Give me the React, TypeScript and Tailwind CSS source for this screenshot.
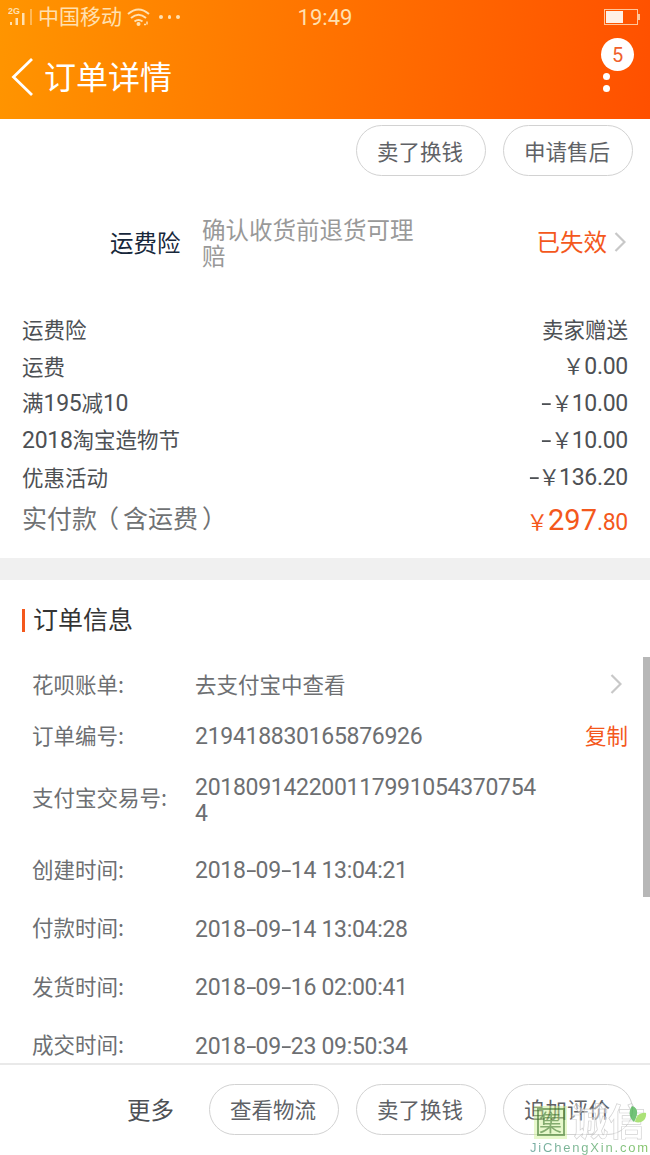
import type { ReactNode } from "react";

const priceRows = [
  { label: <>运费险</>, value: <>卖家赠送</> },
  { label: <>运费</>, value: <Yen amount="0.00" /> },
  { label: <>满<Num>195</Num>减<Num>10</Num></>, value: <Yen minus amount="10.00" /> },
  { label: <><Num>2018</Num>淘宝造物节</>, value: <Yen minus amount="10.00" /> },
  { label: <>优惠活动</>, value: <Yen minus amount="136.20" /> },
];

const timeRows = [
  { label: "创建时间:", date: "2018-09-14 13:04:21" },
  { label: "付款时间:", date: "2018-09-14 13:04:28" },
  { label: "发货时间:", date: "2018-09-16 02:00:41" },
  { label: "成交时间:", date: "2018-09-23 09:50:34" },
];

// digits run slightly larger than the Chinese text around them
function Num({ children }: { children: ReactNode }) {
  return (
    <span className="font-['Roboto','Noto_Sans_CJK_SC',sans-serif] text-[23px] tracking-[-0.3px]">{children}</span>
  );
}

function Dash() {
  return <span className="inline-block w-[10px] scale-x-160 text-center">-</span>;
}

function Yen({ amount, minus = false }: { amount: string; minus?: boolean }) {
  return (
    <span>
      {minus && <Num><Dash /></Num>}
      <span className={minus ? "-mr-px" : ""}>￥</span>
      <Num>{amount}</Num>
    </span>
  );
}

function DateText({ value }: { value: string }) {
  const parts = value.split("-");
  return (
    <span className="pt-px leading-none whitespace-nowrap">
      <Num>
        {parts[0]}<Dash />{parts[1]}<Dash />{parts[2]}
      </Num>
    </span>
  );
}

function Pill({ children }: { children: ReactNode }) {
  return (
    <button className="h-[51px] w-[130px] shrink-0 rounded-full border border-[#d2d2d2] bg-white pr-[2px] text-[21.5px] leading-none text-[#606266]">
      {children}
    </button>
  );
}

function Chevron() {
  return (
    <svg className="h-[20px] w-[12px] shrink-0" viewBox="0 0 12 20" fill="none" stroke="#c8c8c8" strokeWidth="2.2">
      <path d="M1.500 1L10.500 10L1.500 19" />
    </svg>
  );
}

function StatusBar() {
  return (
    <div className="flex h-[34px] items-center text-[#ffe0b0]">
      <div className="flex flex-1 items-center pl-[8px]">
        <svg className="h-[20px] w-[26px]" viewBox="0 0 26 20" fill="currentColor">
          <text x="0" y="7" fontSize="9" fontWeight="bold" fontFamily="Liberation Sans, sans-serif">2G</text>
          <rect x="2" y="15" width="2" height="3" />
          <rect x="7.500" y="11" width="2.500" height="7" />
          <rect x="14" y="6" width="2.500" height="12" />
          <rect x="22.500" y="2" width="1" height="16" />
        </svg>
        <span className="ml-[4px] pb-[4px] text-[21px] leading-none">中国移动</span>
        <svg className="ml-[5px] h-[20px] w-[24px]" viewBox="0 0 24 20" fill="none" stroke="currentColor" strokeWidth="2">
          <path d="M1 7Q11.500 -2 22 7" />
          <path d="M4 11Q11.500 4.500 19 11" />
          <path d="M7.500 14.500Q11.500 11.500 15.500 14.500" />
          <circle cx="11.500" cy="17" r="1" fill="currentColor" />
          <path d="M17 17.500h2M20 14.500v3" strokeWidth="1.500" />
        </svg>
        <div className="ml-[8px] flex gap-[5px]">
          <span className="size-[3.500px] rounded-full bg-current" />
          <span className="size-[3.500px] rounded-full bg-current" />
          <span className="size-[3.500px] rounded-full bg-current" />
        </div>
      </div>
      <span className="pt-[2px] pl-[2px] font-['Roboto',sans-serif] text-[22px] leading-none">19:49</span>
      <div className="flex flex-1 items-center justify-end pr-[10px]">
        <div className="h-[16px] w-[34px] border border-[#ffc59a] p-px">
          <div className="h-full w-[17px] bg-[#fff0e6]" />
        </div>
        <div className="h-[6px] w-[2px] bg-[#ffc59a]" />
      </div>
    </div>
  );
}

function Header() {
  return (
    <header className="h-[119px] shrink-0 bg-[linear-gradient(97deg,#ff9500_0%,#ff5000_100%)]">
      <StatusBar />
      <div className="flex h-[85px] items-center pr-[40px] pl-[11px] text-white">
        <svg className="h-[40px] w-[23px]" viewBox="0 0 23 40" fill="none" stroke="currentColor" strokeWidth="2.8">
          <path d="M21 2L2.500 20L21 38" />
        </svg>
        <h1 className="ml-[10px] flex-1 pb-[4px] text-[32px] leading-none">订单详情</h1>
        <div className="relative flex flex-col gap-[5px] pt-[11px]">
          <span className="size-[7px] rounded-full bg-white" />
          <span className="size-[7px] rounded-full bg-white" />
          <span className="absolute -top-[24px] -left-[2px] flex size-[33px] items-center justify-center rounded-full bg-white pt-[2px] font-['Roboto',sans-serif] text-[20px] leading-none text-[#f0602c]">
            5
          </span>
        </div>
      </div>
    </header>
  );
}

function InfoRow({ label, className, children }: { label: string; className: string; children: ReactNode }) {
  return (
    <div className={`flex items-center pr-[22px] pl-[32px] ${className}`}>
      <span className="w-[163px] shrink-0 pb-[4px] text-[21.5px] leading-none">{label}</span>
      {children}
    </div>
  );
}

function Watermark() {
  return (
    <div className="pointer-events-none absolute right-0 bottom-0 w-[121px] opacity-75">
      <div className="flex h-[34px] items-center">
        <div className="ml-[5px] flex size-[33px] shrink-0 items-center justify-center bg-[#c9f08c]/60">
          <span className="flex size-[28px] items-center justify-center border-2 border-[#5b9140] pb-[2px] text-[23px] leading-none text-[#5b9140]">
            集
          </span>
        </div>
        <span className="ml-[4px] pb-[4px] text-[37px] leading-none font-bold whitespace-nowrap text-white/60 [-webkit-text-stroke:0.7px_#c4c4c4]">诚信</span>
      </div>
      <svg className="absolute top-0 right-[3px] h-[20px] w-[18px]" viewBox="0 0 18 20">
        <path d="M3 1C10 3 9 10 5 17C-1 12 0 5 3 1Z" fill="#45b04b" />
        <path d="M6 17C7 11 11 7 17 8C18 14 13 19 6 17Z" fill="#8fd94a" />
      </svg>
      <div className="mt-[2px] h-[14px] bg-linear-to-r from-[#4a9087] to-[#5cb332] bg-clip-text pl-px font-['Liberation_Sans',sans-serif] text-[13px] leading-[14px] tracking-[1.8px] whitespace-nowrap text-transparent">
        JiChengXin.com
      </div>
    </div>
  );
}

export default function App() {
  return (
    <div className="relative flex h-[1155px] w-[650px] flex-col overflow-hidden bg-white font-['Noto_Sans_CJK_SC',sans-serif] text-[#4d5054]">
      <Header />

      <main className="h-[944px] overflow-hidden">
        <div className="flex justify-end gap-[17px] pt-[6px] pr-[17px]">
          <Pill>卖了换钱</Pill>
          <Pill>申请售后</Pill>
        </div>

        <div className="mt-[26px] flex h-[80px] items-center pr-[24px] pl-[110px]">
          <span className="w-[92px] pt-[2px] text-[23.5px] leading-none text-[#17273b]">运费险</span>
          <p className="w-[215px] text-[23.5px] leading-[26px] text-[#999]">确认收货前退货可理赔</p>
          <span className="mr-[7px] ml-auto text-[23.5px] leading-none text-[#f4581c]">已失效</span>
          <Chevron />
        </div>

        <div className="mt-[28px] px-[22px] text-[21.5px]">
          {priceRows.map((row, i) => (
            <div key={i} className="flex h-[37px] items-center justify-between leading-[37px]">
              <span>{row.label}</span>
              {row.value}
            </div>
          ))}
          <div className="flex h-[47px] items-center justify-between pb-[2px] text-[25px] leading-none text-[#707274]">
            <span>
              实付款<span className="mr-[4px] -ml-[3px]">（</span>含运费
              <span className="ml-[4px]">）</span>
            </span>
            <span className="flex items-baseline pt-[5px] font-['Roboto','Noto_Sans_CJK_SC',sans-serif] text-[#f4581c]">
              <span className="text-[21.5px]">￥</span>
              <span className="text-[29px]">297</span>
              <span className="text-[23px] tracking-[-0.3px]">.80</span>
            </span>
          </div>
        </div>

        <div className="mt-[16px] h-[22px] bg-[#f0f0f0]" />

        <div className="flex h-[80px] items-center pl-[22px]">
          <span className="h-[23px] w-[3px] bg-[#f4581c]" />
          <h2 className="ml-[8px] pb-[4px] text-[25px] leading-none text-[#333]">订单信息</h2>
        </div>

        <div className="text-[#6d6f72]">
          <InfoRow label="花呗账单:" className="h-[51px]">
            <span className="flex-1 pb-[3px] text-[21.5px] leading-none">去支付宝中查看</span>
            <span className="mr-[6px] flex pb-[4px]"><Chevron /></span>
          </InfoRow>
          <InfoRow label="订单编号:" className="h-[51px]">
            <span className="flex-1 leading-none"><Num>219418830165876926</Num></span>
            <span className="pb-[4px] text-[21.5px] leading-none text-[#f4581c]">复制</span>
          </InfoRow>
          <InfoRow label="支付宝交易号:" className="h-[74px]">
            <span className="w-[346px] pt-[3px] leading-[25px] break-all"><Num>2018091422001179910543707544</Num></span>
          </InfoRow>
          <div className="mt-[5px]">
            {timeRows.map((row) => (
              <InfoRow key={row.label} label={row.label} className="h-[58.500px]">
                <DateText value={row.date} />
              </InfoRow>
            ))}
          </div>
        </div>
      </main>

      <footer className="relative flex h-[92px] shrink-0 items-center justify-end gap-[17px] border-t-2 border-[#e9e9e9] bg-white pr-[17px] pb-[2px]">
        <span className="mr-[18px] pt-[2px] text-[23.5px] leading-none">更多</span>
        <Pill>查看物流</Pill>
        <Pill>卖了换钱</Pill>
        <Pill>追加评价</Pill>
        <Watermark />
      </footer>

      {/* scroll thumb */}
      <div className="absolute top-[657px] right-0 h-[240px] w-[7px] bg-[#b7b7b7]" />
    </div>
  );
}
